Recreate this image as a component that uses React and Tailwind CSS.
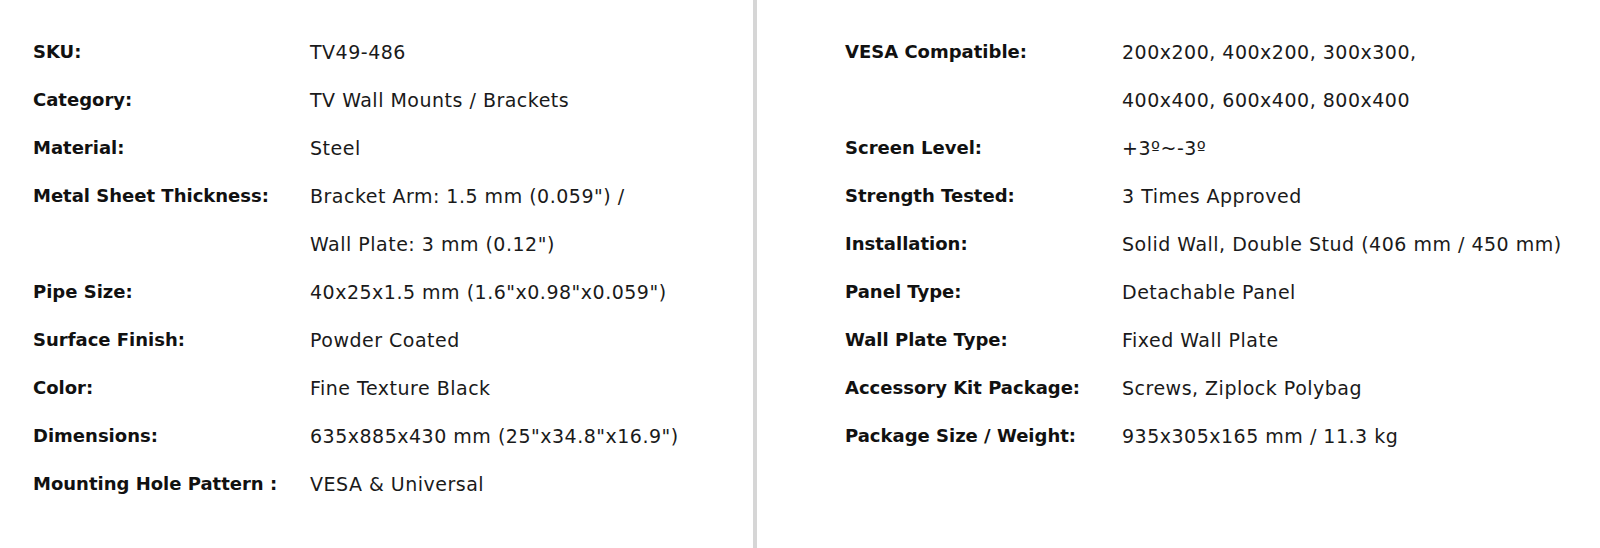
import React from 'react';

const leftSpecs = [
  { label: 'SKU:', value: ['TV49-486'] },
  { label: 'Category:', value: ['TV Wall Mounts / Brackets'] },
  { label: 'Material:', value: ['Steel'] },
  { label: 'Metal Sheet Thickness:', value: ['Bracket Arm: 1.5 mm (0.059") /', 'Wall Plate: 3 mm (0.12")'] },
  { label: 'Pipe Size:', value: ['40x25x1.5 mm (1.6"x0.98"x0.059")'] },
  { label: 'Surface Finish:', value: ['Powder Coated'] },
  { label: 'Color:', value: ['Fine Texture Black'] },
  { label: 'Dimensions:', value: ['635x885x430 mm (25"x34.8"x16.9")'] },
  { label: 'Mounting Hole Pattern :', value: ['VESA & Universal'] },
];

const rightSpecs = [
  { label: 'VESA Compatible:', value: ['200x200, 400x200, 300x300,', '400x400, 600x400, 800x400'] },
  { label: 'Screen Level:', value: ['+3º~-3º'] },
  { label: 'Strength Tested:', value: ['3 Times Approved'] },
  { label: 'Installation:', value: ['Solid Wall, Double Stud (406 mm / 450 mm)'] },
  { label: 'Panel Type:', value: ['Detachable Panel'] },
  { label: 'Wall Plate Type:', value: ['Fixed Wall Plate'] },
  { label: 'Accessory Kit Package:', value: ['Screws, Ziplock Polybag'] },
  { label: 'Package Size / Weight:', value: ['935x305x165 mm / 11.3 kg'] },
];

const SpecList = ({ items }) => (
  <dl className="grid grid-cols-[277px_1fr] leading-[48px]">
    {items.map((item) => (
      <React.Fragment key={item.label}>
        <dt className="font-['DejaVu_Sans',sans-serif] text-[18px] font-bold text-[#111] whitespace-nowrap">
          {item.label}
        </dt>
        <dd className="font-['DejaVu_Sans',sans-serif] text-[19px] tracking-[0.5px] text-[#1a1a1a] whitespace-nowrap">
          {item.value.map((line) => (
            <div key={line}>{line}</div>
          ))}
        </dd>
      </React.Fragment>
    ))}
  </dl>
);

export default function App() {
  return (
    <div className="flex h-[548px] w-[1600px] bg-white">
      <div className="w-[753px] pl-[33px] pt-[28px]">
        <SpecList items={leftSpecs} />
      </div>
      <div className="w-[4px] bg-[#d6d6d6]" />
      <div className="flex-1 pl-[88px] pt-[28px]">
        <SpecList items={rightSpecs} />
      </div>
    </div>
  );
}
